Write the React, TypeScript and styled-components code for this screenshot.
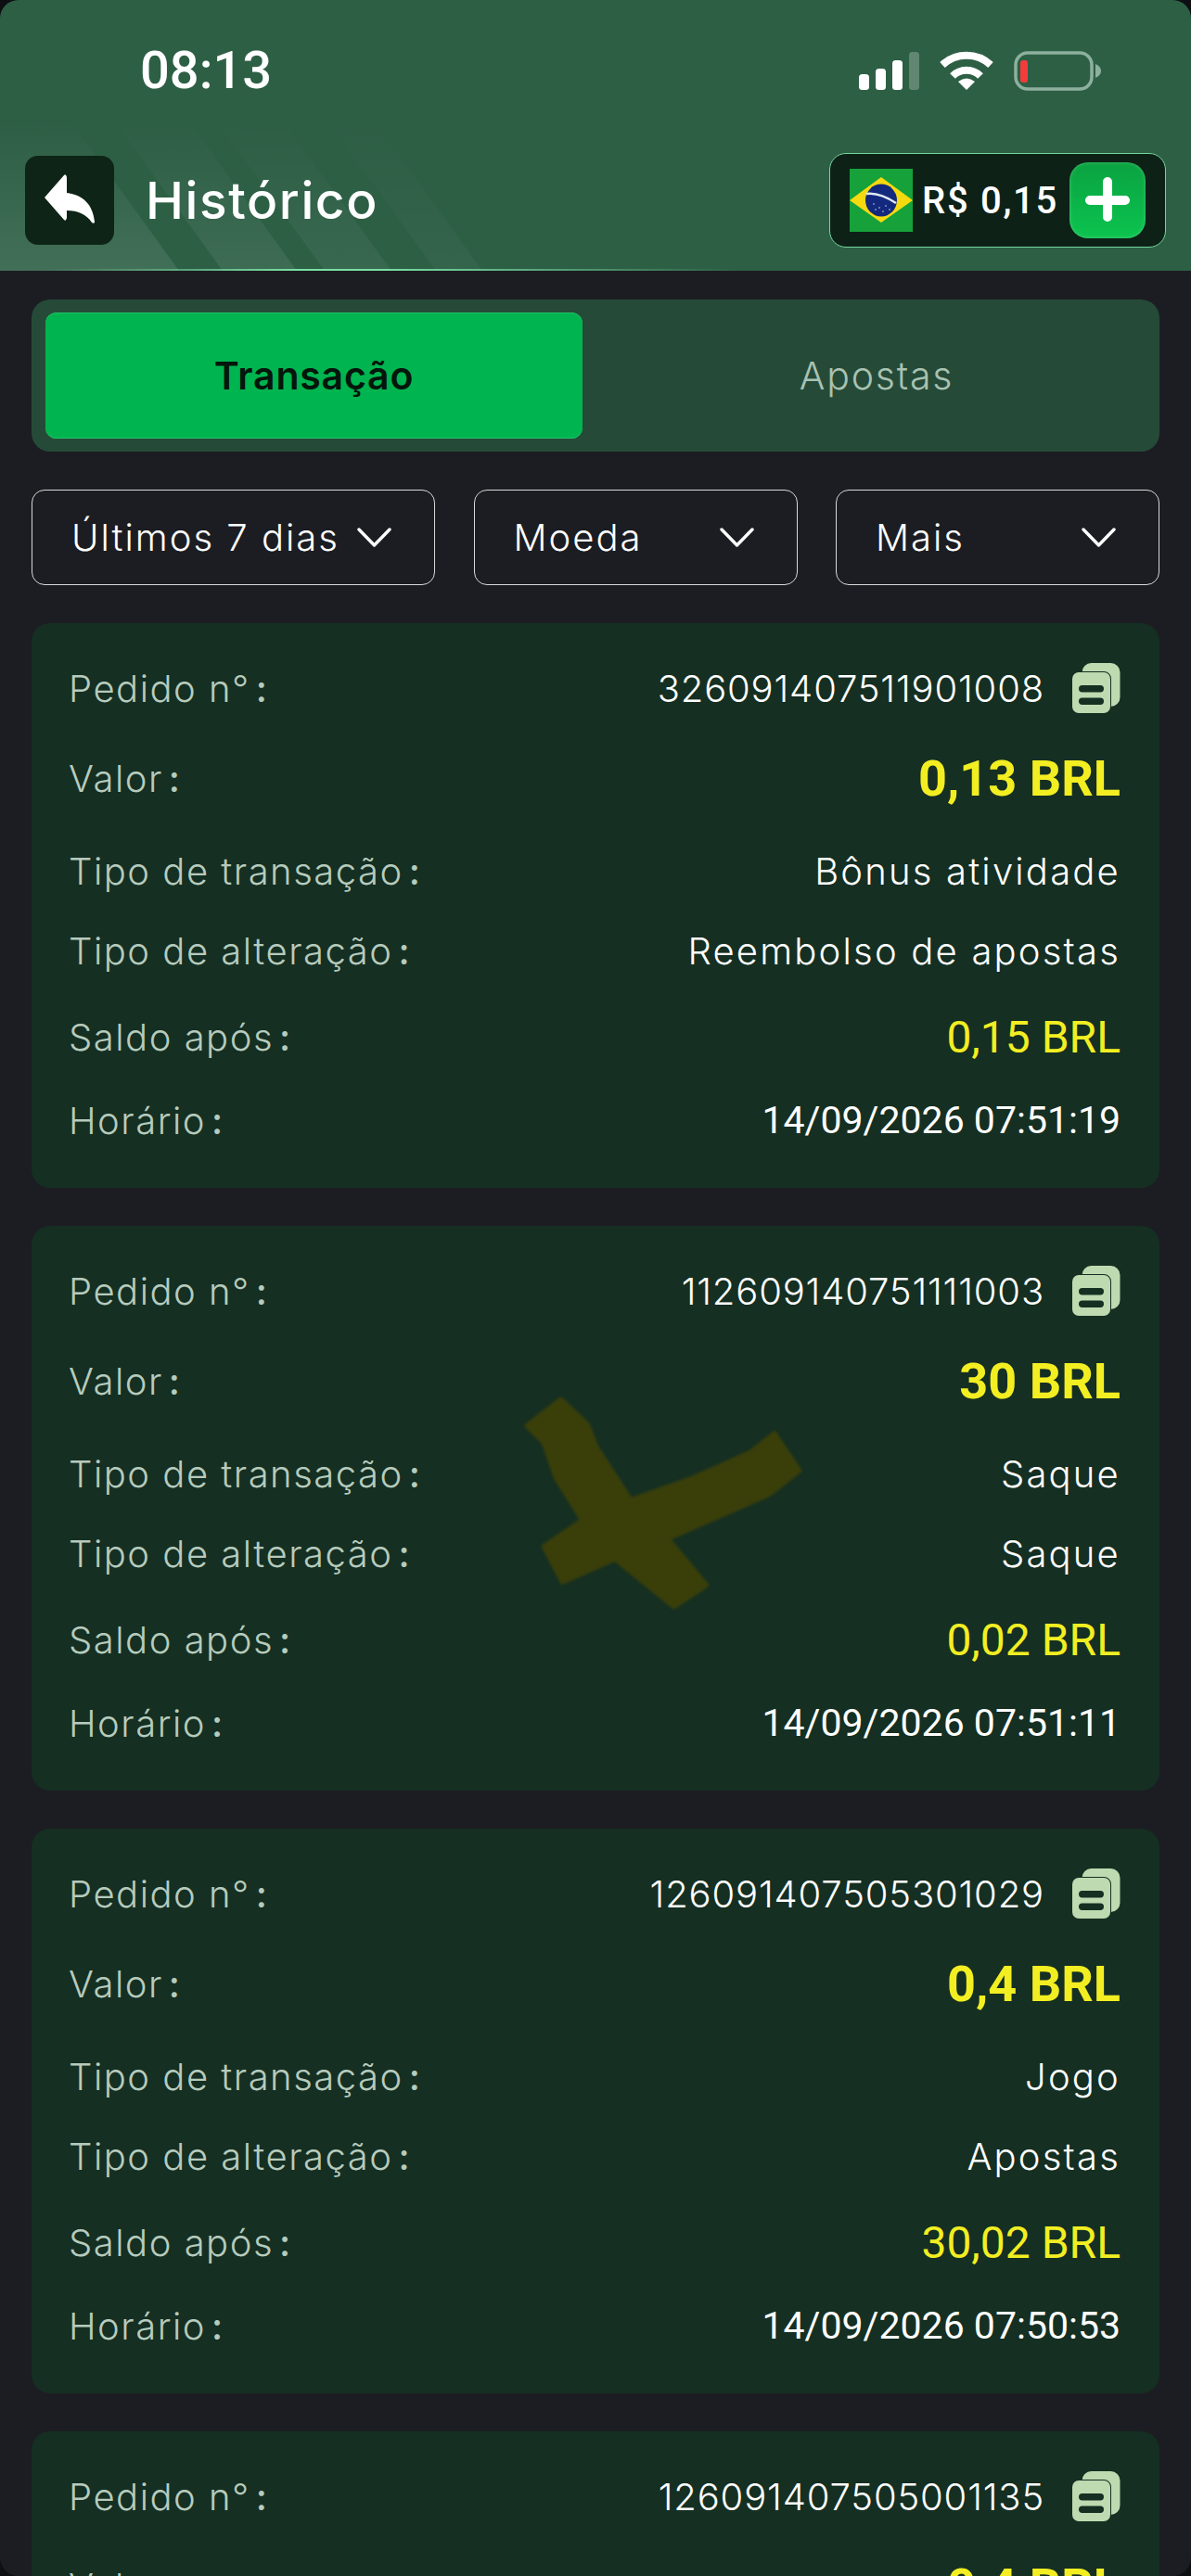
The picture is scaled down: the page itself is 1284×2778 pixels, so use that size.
import React from 'react';
import styled, { createGlobalStyle } from 'styled-components';

const GlobalStyle = createGlobalStyle`
    html, body {
        margin: 0;
        padding: 0;
        background: #0e0f12;
    }
`;

const Page = styled.div`
    position: relative;
    width: 1284px;
    height: 2778px;
    overflow: hidden;
    border-radius: 20px;
    background: #1c1d22;
    font-family: Inter, "Liberation Sans", sans-serif;
`;

const Header = styled.header`
    position: relative;
    height: 292px;
    background: #2d5f45;
`;

const Stripes = styled.svg`
    position: absolute;
    left: 0;
    top: 0;
`;

const HeaderLine = styled.div`
    position: absolute;
    left: 0;
    right: 0;
    bottom: 0;
    height: 2px;
    background: linear-gradient(90deg, rgba(123, 224, 164, 0) 4%, #7be0a4 25%, #7be0a4 32%, rgba(123, 224, 164, 0) 62%);
`;

const StatusBar = styled.div`
    position: relative;
    height: 152px;
    padding: 0 97px 0 151px;
    box-sizing: border-box;
    display: flex;
    align-items: center;
    justify-content: space-between;
`;

const Time = styled.span`
    font-family: Roboto, sans-serif;
    font-size: 56px;
    font-weight: 500;
    color: #fff;
`;

const StatusIcons = styled.div`
    display: flex;
    align-items: center;
    gap: 22px;
`;

const NavBar = styled.div`
    position: relative;
    height: 128px;
    padding: 0 27px;
    display: flex;
    align-items: center;
    box-sizing: border-box;
`;

const BackButton = styled.button`
    width: 96px;
    height: 96px;
    padding: 0;
    border: none;
    border-radius: 14px;
    background: #0d2416;
    display: flex;
`;

const Title = styled.h1`
    margin: 0 0 0 34px;
    font-size: 55px;
    font-weight: 500;
    color: #fff;
    letter-spacing: 1.6px;
    flex: 1;
`;

const Balance = styled.div`
    width: 363px;
    height: 102px;
    box-sizing: border-box;
    padding: 0 21px;
    border: 1.5px solid #76d69d;
    border-radius: 18px;
    background: #0d2117;
    display: flex;
    align-items: center;
`;

const BalanceText = styled.span`
    margin-left: 10px;
    flex: 1;
    font-family: Roboto, sans-serif;
    font-size: 40px;
    font-weight: 500;
    letter-spacing: 1.7px;
    white-space: nowrap;
    color: #fff;
`;

const PlusButton = styled.button`
    width: 82px;
    height: 82px;
    padding: 0;
    border: none;
    border-radius: 20px;
    background: linear-gradient(180deg, #0aa241, #0cc44f);
    box-shadow: inset 0 0 4px rgba(255, 255, 255, 0.25);
    display: flex;
`;

const Content = styled.main`
    padding: 31px 34px 0;
    display: flex;
    flex-direction: column;
`;

const Tabs = styled.div`
    height: 164px;
    box-sizing: border-box;
    padding: 14px 0 14px 15px;
    border-radius: 20px;
    background: #254b38;
    display: grid;
    grid-template-columns: 579px 1fr;
`;

const Tab = styled.div<{ $active?: boolean }>`
    border-radius: 12px;
    display: flex;
    align-items: center;
    justify-content: center;
    font-size: 41px;
    letter-spacing: ${(p) => (p.$active ? '0.8px' : '1.8px')};
    font-weight: ${(p) => (p.$active ? 600 : 300)};
    color: ${(p) => (p.$active ? '#04150b' : '#a9c2b2')};
    background: ${(p) => (p.$active ? '#00b44f' : 'transparent')};
    box-shadow: ${(p) => (p.$active ? 'inset 0 1px 0 #22c268, inset 0 -1px 0 #22c268' : 'none')};
    padding-left: ${(p) => (p.$active ? '0' : '12px')};
`;

const Filters = styled.div`
    margin-top: 41px;
    display: grid;
    grid-template-columns: 435px 349px 349px;
    column-gap: 41.5px;
`;

const Filter = styled.div`
    height: 103px;
    box-sizing: border-box;
    padding: 0 46px 0 42px;
    border: 1.5px solid #d6d8d8;
    border-radius: 14px;
    display: flex;
    align-items: center;
    justify-content: space-between;
    font-size: 40px;
    font-weight: 300;
    letter-spacing: 2px;
    color: #fff;
`;

const CardList = styled.div`
    margin-top: 41px;
    display: flex;
    flex-direction: column;
    gap: 41px;
`;

const Card = styled.section`
    position: relative;
    height: 609px;
    box-sizing: border-box;
    padding: 28px 42px 0 40px;
    border-radius: 20px;
    background: #152f22;
    flex-shrink: 0;
`;

const Row = styled.div<{ $height: number }>`
    height: ${(p) => p.$height}px;
    display: flex;
    align-items: center;
    justify-content: space-between;
    position: relative;
`;

const Label = styled.span`
    margin-top: 1px;
    font-size: 40px;
    font-weight: 300;
    letter-spacing: 1.5px;
    color: #b6cbbd;
`;

const Colon = styled.span`
    margin-left: 6px;
    font-weight: 500;
`;

const ValueGroup = styled.div`
    display: flex;
    align-items: center;
    gap: 30px;
`;

const Value = styled.span<{ $kind: 'order' | 'text' | 'amount' | 'balance' | 'date' }>`
    color: ${(p) => (p.$kind === 'amount' || p.$kind === 'balance' ? '#f2ee22' : '#fff')};
    font-family: ${(p) => (p.$kind === 'order' || p.$kind === 'text' ? 'Inter, sans-serif' : 'Roboto, sans-serif')};
    font-size: ${(p) => ({ order: '40px', text: '40px', amount: '54px', balance: '48px', date: '41px' }[p.$kind])};
    font-weight: ${(p) => ({ order: 300, text: 300, amount: 700, balance: 400, date: 400 }[p.$kind])};
    letter-spacing: ${(p) => ({ order: '0.85px', text: '2.2px', amount: '0', balance: '0', date: '0' }[p.$kind])};
`;

const Watermark = styled.svg`
    position: absolute;
    left: 529px;
    top: 182px;
    pointer-events: none;
    filter: blur(1.5px);
`;

const Chevron = () => (
    <svg width="37" height="22" viewBox="0 0 37 22" fill="none">
        <path d="M2 2 L18.5 19 L35 2" stroke="#fff" strokeWidth="3.4" strokeLinecap="round" strokeLinejoin="round" />
    </svg>
);

const CopyIcon = () => (
    <svg width="52" height="54" viewBox="0 0 52 54">
        <rect x="10.5" y="0" width="41" height="47" rx="10" fill="#bddab0" />
        <rect x="0" y="10" width="41" height="44" rx="7" fill="#bddab0" stroke="#152f22" strokeWidth="2" paintOrder="stroke" />
        <rect x="7" y="24" width="27" height="7.5" rx="3.7" fill="#152f22" />
        <rect x="7" y="37.5" width="27" height="7.5" rx="3.7" fill="#152f22" />
    </svg>
);

const SignalIcon = () => (
    <svg width="65" height="41" viewBox="0 0 65 41">
        <rect x="0" y="24" width="11" height="17" rx="3.5" fill="#fff" />
        <rect x="18" y="18" width="11" height="23" rx="3.5" fill="#fff" />
        <rect x="36" y="9" width="11" height="32" rx="3.5" fill="#fff" />
        <rect x="54" y="0" width="11" height="41" rx="3.5" fill="#fff" opacity="0.25" />
    </svg>
);

const WifiIcon = () => (
    <svg width="58" height="42" viewBox="0 0 58 42" fill="none">
        <path d="M3 15 A38 38 0 0 1 55 15" stroke="#fff" strokeWidth="8" />
        <path d="M14 27 A21 21 0 0 1 44 27" stroke="#fff" strokeWidth="8" />
        <path d="M20 33 Q29 26 38 33 L29 42 Z" fill="#fff" />
    </svg>
);

const BatteryIcon = () => (
    <svg width="94" height="43" viewBox="0 0 94 43">
        <rect x="2" y="2" width="82" height="39" rx="13" fill="none" stroke="#8db09e" strokeWidth="3.5" />
        <rect x="7" y="10" width="8" height="24" rx="3" fill="#f53b3b" />
        <path d="M88 14 C92 16 94 18 94 21.5 C94 25 92 27 88 29 Z" fill="#8db09e" />
    </svg>
);

const BackIcon = () => (
    <svg width="96" height="96" viewBox="0 0 96 96">
        <path
            d="M21 45 L42 21 Q44 19 45 23 L45 40 C62 42 73 52 75 71 Q75 74 72 72 C66 63 57 59 45 59 L45 67 Q44 71 42 69 Z"
            fill="#fff"
        />
    </svg>
);

const BrazilFlag = () => (
    <svg width="68" height="68" viewBox="0 0 68 68" style={{ flexShrink: 0 }}>
        <rect width="68" height="68" fill="#17a13a" />
        <path d="M34 9 L68 34 L34 58 L0 34 Z" fill="#f7d90f" />
        <ellipse cx="34" cy="34" rx="17" ry="17.5" fill="#13297d" />
        <path d="M18 27 Q32 25 50 37" stroke="#dfe9f2" strokeWidth="2.6" fill="none" />
        <g fill="#c9d6ee">
            <circle cx="26" cy="38" r="0.8" />
            <circle cx="32" cy="42" r="0.8" />
            <circle cx="39" cy="40" r="0.8" />
            <circle cx="36" cy="46" r="0.8" />
            <circle cx="28" cy="44" r="0.8" />
            <circle cx="43" cy="44" r="0.8" />
        </g>
    </svg>
);

const PlusIcon = () => (
    <svg width="82" height="82" viewBox="0 0 82 82">
        <path d="M41 21 V59 M22 41 H60" stroke="#fff" strokeWidth="10" strokeLinecap="round" />
    </svg>
);

// faint diagonal bands behind the title bar, fading up and to the right
const bands: [number, number, number][] = [
    [-120, 193, 1],
    [240, 320, 0.8],
    [350, 422, 0.55],
    [470, 520, 0.35],
];

const HeaderStripes = () => (
    <Stripes width="1284" height="292" viewBox="0 0 1284 292">
        <defs>
            <linearGradient id="band" gradientUnits="userSpaceOnUse" x1="0" y1="292" x2="0" y2="130">
                <stop offset="0" stopColor="#fff" stopOpacity="0.1" />
                <stop offset="0.6" stopColor="#fff" stopOpacity="0.04" />
                <stop offset="1" stopColor="#fff" stopOpacity="0" />
            </linearGradient>
        </defs>
        {bands.map(([a, b, opacity]) => (
            <polygon key={a} points={`${a - 117},130 ${b - 117},130 ${b},292 ${a},292`} fill="url(#band)" opacity={opacity} />
        ))}
    </Stripes>
);

const WatermarkCross = () => (
    <Watermark width="302" height="234" viewBox="190 130 905 700">
        <path
            d="M205 230 L315 145 L400 225 L430 300 L540 470 L740 400 L930 315 L1005 255 L1085 375 L990 450 L660 595 L785 745 L680 815 L490 660 L320 735 L260 620 L385 535 L300 400 L260 285 Z"
            fill="#3a3f0a"
            stroke="#3a3f0a"
            strokeWidth="16"
            strokeLinejoin="round"
        />
    </Watermark>
);

type Transaction = {
    order: string;
    amount: string;
    type?: string;
    change?: string;
    balance?: string;
    time?: string;
    watermark?: boolean;
};

const transactions: Transaction[] = [
    { order: '326091407511901008', amount: '0,13 BRL', type: 'Bônus atividade', change: 'Reembolso de apostas', balance: '0,15 BRL', time: '14/09/2026 07:51:19' },
    { order: '112609140751111003', amount: '30 BRL', type: 'Saque', change: 'Saque', balance: '0,02 BRL', time: '14/09/2026 07:51:11', watermark: true },
    { order: '126091407505301029', amount: '0,4 BRL', type: 'Jogo', change: 'Apostas', balance: '30,02 BRL', time: '14/09/2026 07:50:53' },
    { order: '126091407505001135', amount: '0,4 BRL' },
];

const RowLabel: React.FC<{ text: string }> = ({ text }) => (
    <Label>
        {text}
        <Colon>:</Colon>
    </Label>
);

const TransactionCard: React.FC<{ item: Transaction }> = ({ item }) => (
    <Card>
        {item.watermark && <WatermarkCross />}
        <Row $height={84}>
            <RowLabel text="Pedido n°" />
            <ValueGroup>
                <Value $kind="order">{item.order}</Value>
                <CopyIcon />
            </ValueGroup>
        </Row>
        <Row $height={110}>
            <RowLabel text="Valor" />
            <Value $kind="amount">{item.amount}</Value>
        </Row>
        {item.type && (
            <Row $height={90}>
                <RowLabel text="Tipo de transação" />
                <Value $kind="text">{item.type}</Value>
            </Row>
        )}
        {item.change && (
            <Row $height={82}>
                <RowLabel text="Tipo de alteração" />
                <Value $kind="text">{item.change}</Value>
            </Row>
        )}
        {item.balance && (
            <Row $height={104}>
                <RowLabel text="Saldo após" />
                <Value $kind="balance">{item.balance}</Value>
            </Row>
        )}
        {item.time && (
            <Row $height={76}>
                <RowLabel text="Horário" />
                <Value $kind="date">{item.time}</Value>
            </Row>
        )}
    </Card>
);

const App: React.FC = () => (
    <Page>
        <GlobalStyle />
        <Header>
            <HeaderStripes />
            <StatusBar>
                <Time>08:13</Time>
                <StatusIcons>
                    <SignalIcon />
                    <WifiIcon />
                    <BatteryIcon />
                </StatusIcons>
            </StatusBar>
            <NavBar>
                <BackButton>
                    <BackIcon />
                </BackButton>
                <Title>Histórico</Title>
                <Balance>
                    <BrazilFlag />
                    <BalanceText>R$ 0,15</BalanceText>
                    <PlusButton>
                        <PlusIcon />
                    </PlusButton>
                </Balance>
            </NavBar>
            <HeaderLine />
        </Header>
        <Content>
            <Tabs>
                <Tab $active>Transação</Tab>
                <Tab>Apostas</Tab>
            </Tabs>
            <Filters>
                <Filter>
                    Últimos 7 dias
                    <Chevron />
                </Filter>
                <Filter>
                    Moeda
                    <Chevron />
                </Filter>
                <Filter>
                    Mais
                    <Chevron />
                </Filter>
            </Filters>
            <CardList>
                {transactions.map((item) => (
                    <TransactionCard key={item.order} item={item} />
                ))}
            </CardList>
        </Content>
    </Page>
);

export default App;
